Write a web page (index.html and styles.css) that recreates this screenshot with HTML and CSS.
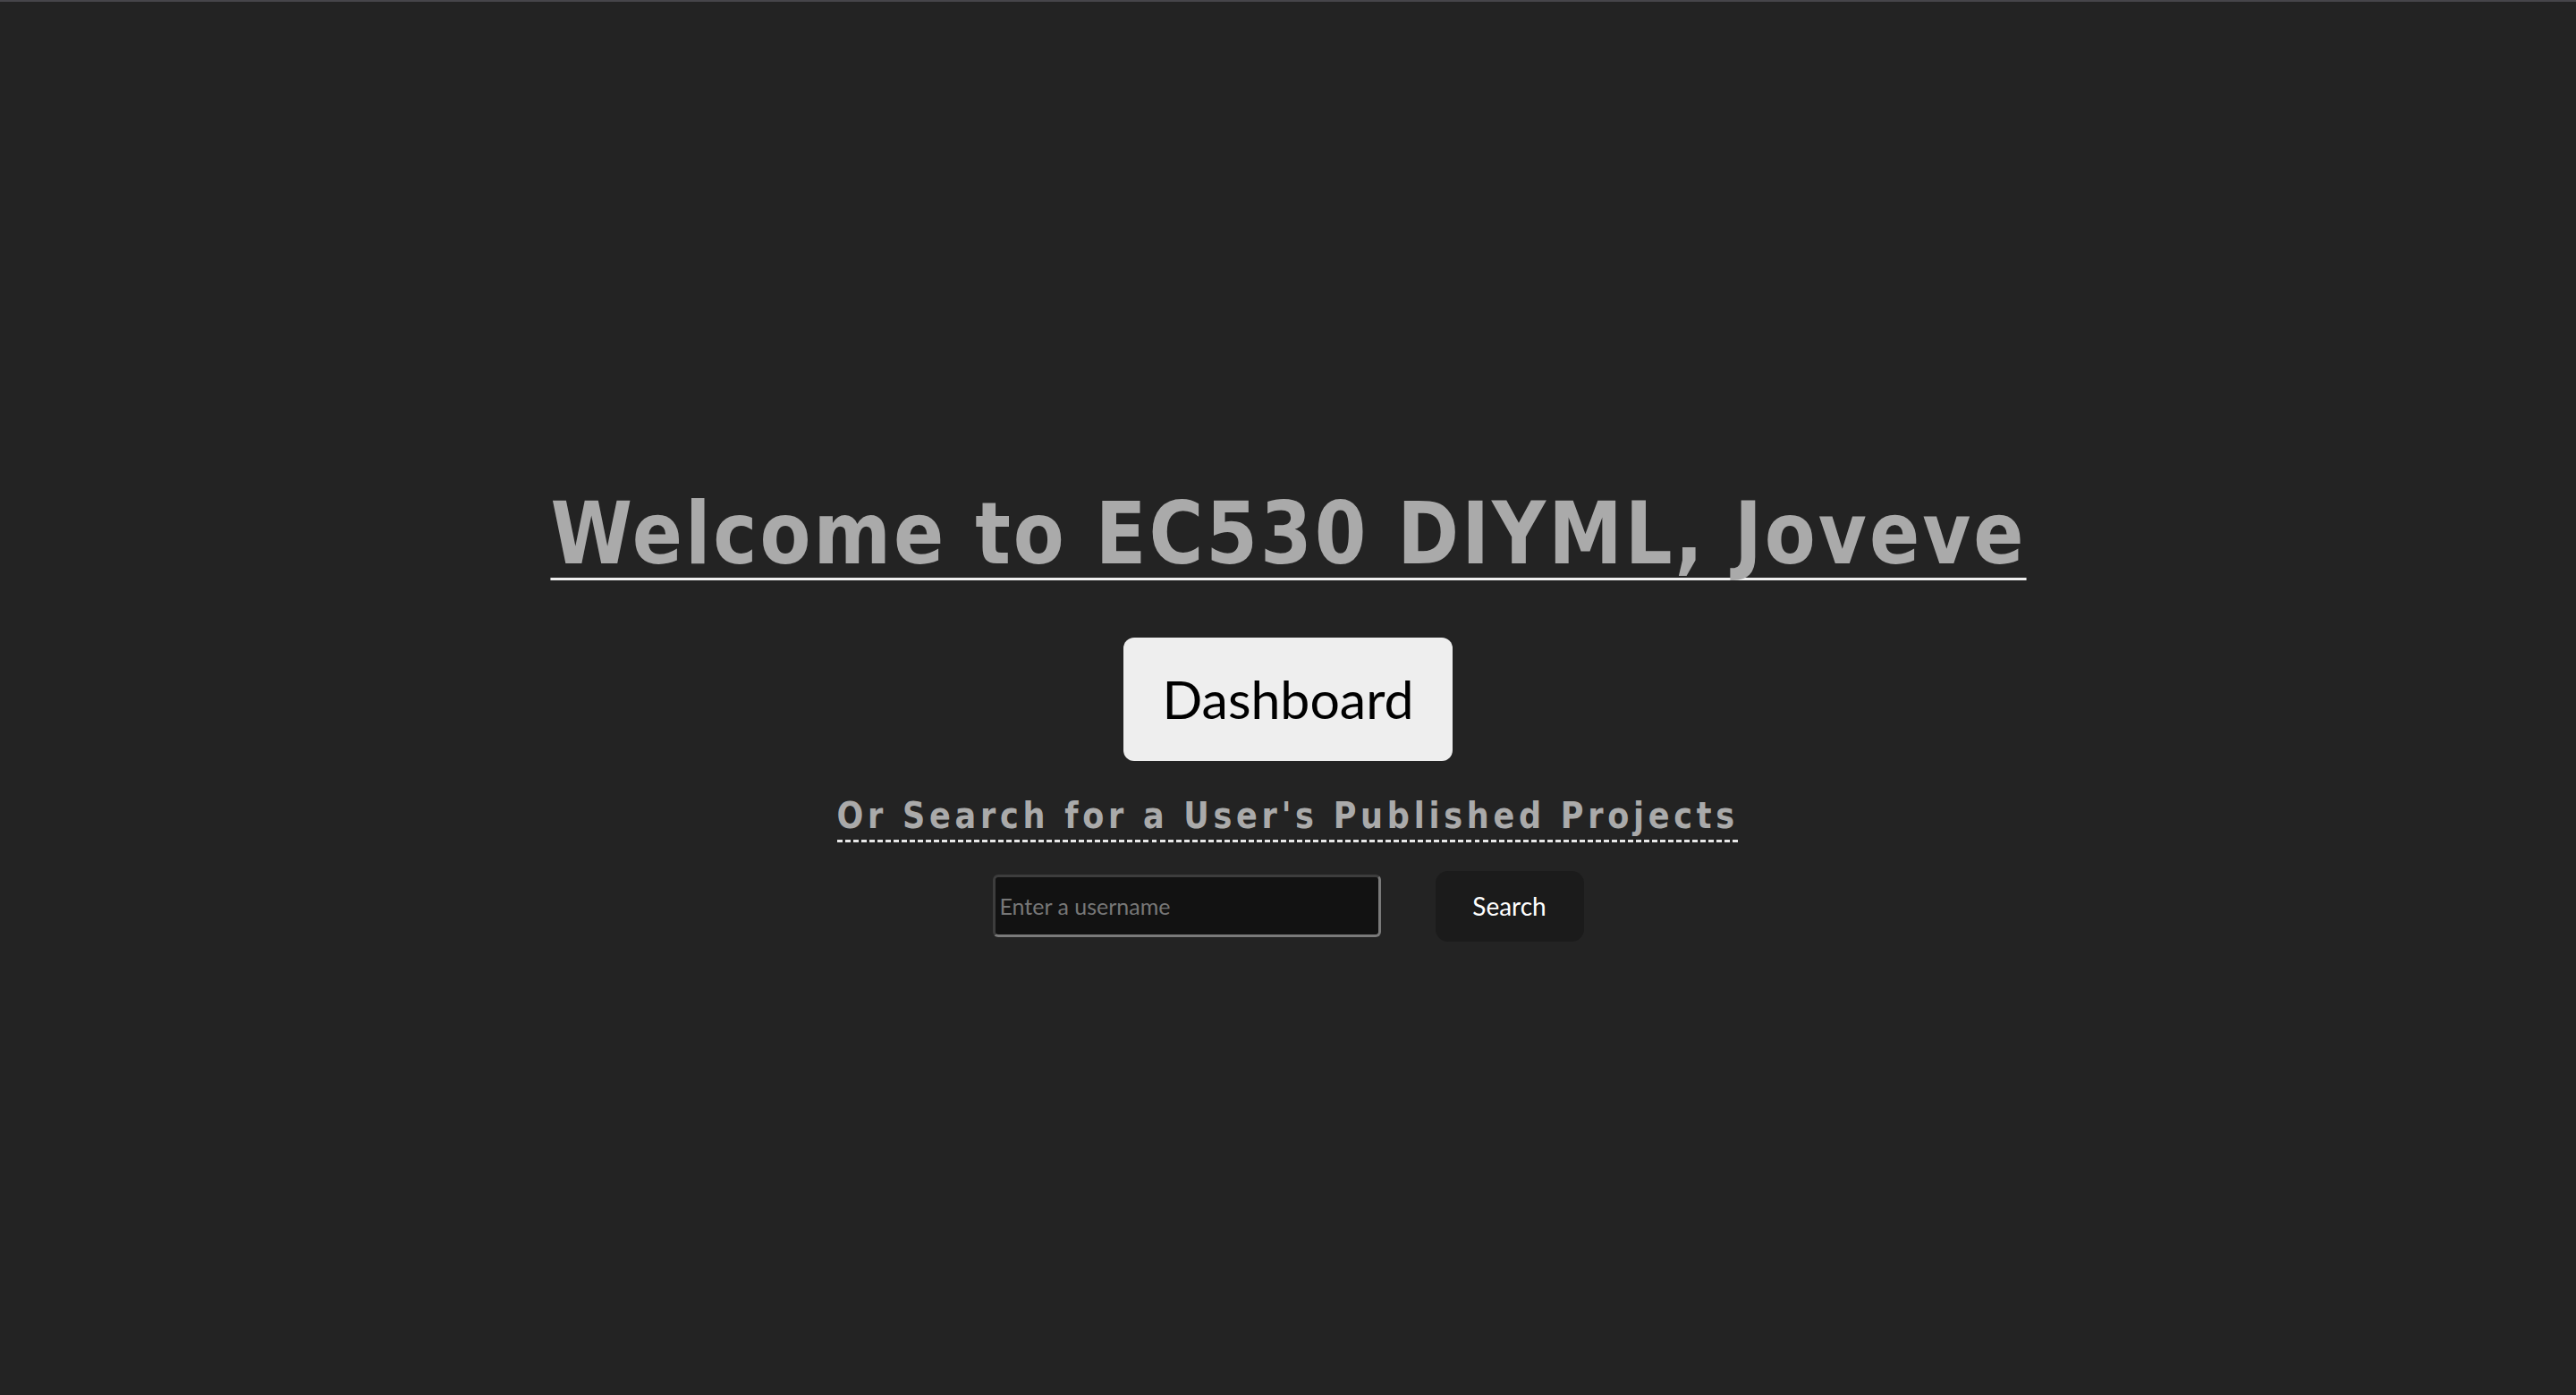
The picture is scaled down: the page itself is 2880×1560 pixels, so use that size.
FILE: index.html
```html
<!DOCTYPE html>
<html lang="en">
<head>
<meta charset="utf-8">
<title>EC530 DIYML</title>
<link rel="stylesheet" href="styles.css">
</head>
<body>
<main class="home">
  <h1 class="welcome">Welcome to EC530 DIYML, Joveve</h1>
  <button class="dashboard-btn" type="button">Dashboard</button>
  <h2 class="search-title">Or Search for a User's Published Projects</h2>
  <form class="search-row">
    <input class="search-input" type="text" placeholder="Enter a username">
    <button class="search-btn" type="button">Search</button>
  </form>
</main>
</body>
</html>
```

FILE: styles.css
```css
* { box-sizing: border-box; }

html, body {
  margin: 0;
  padding: 0;
  background: #232323;
}

body {
  border-top: 2px solid #46454a;
  min-height: 100vh;
}

.home {
  min-height: calc(100vh - 2px);
  display: flex;
  flex-direction: column;
  align-items: center;
  justify-content: center;
  padding-top: 39px;
}

/* slightly condensed look of the original face */
.welcome,
.search-title {
  font-family: "DejaVu Sans Condensed", "DejaVu Sans", sans-serif;
  font-weight: bold;
  color: #aaaaaa;
  transform: scaleX(0.95);
  transform-origin: center;
  white-space: nowrap;
}

.welcome {
  margin: 0;
  font-size: 97px;
  line-height: 1;
  letter-spacing: 3.2px;
  padding-bottom: 1px;
  border-bottom: 3px solid #eeeeee;
}

.dashboard-btn {
  margin-top: 64px;
  width: 368px;
  height: 138px;
  background: #eeeeee;
  color: #000;
  border: none;
  border-radius: 12px;
  font-family: Lato, "Open Sans", sans-serif;
  font-size: 59px;
  line-height: 1.2;
  padding: 0;
}

.search-title {
  margin: 36px 0 0;
  font-size: 41px;
  line-height: 1.25;
  letter-spacing: 5px;
  padding-bottom: 3px;
  background: repeating-linear-gradient(to right, #e8e8e8 0 6.3px, transparent 6.3px 9.5px) left bottom / 100% 3px no-repeat;
}

.search-row {
  margin-top: 32px;
  display: flex;
  align-items: center;
  gap: 61px;
}

.search-input {
  width: 434px;
  height: 70px;
  background: #121212;
  border: 3px solid;
  border-color: #3d3d3d #7a7a7a #7a7a7a #3d3d3d;
  border-radius: 6px;
  padding: 0 5px;
  color: #ddd;
  font-family: Lato, "Open Sans", sans-serif;
  font-size: 25px;
  outline: none;
}

.search-input::placeholder {
  color: #777777;
}

.search-btn {
  width: 166px;
  height: 79px;
  background: #1b1b1b;
  color: #ffffff;
  border: none;
  border-radius: 14px;
  font-family: Lato, "Open Sans", sans-serif;
  font-size: 28px;
  padding: 0;
}
```
